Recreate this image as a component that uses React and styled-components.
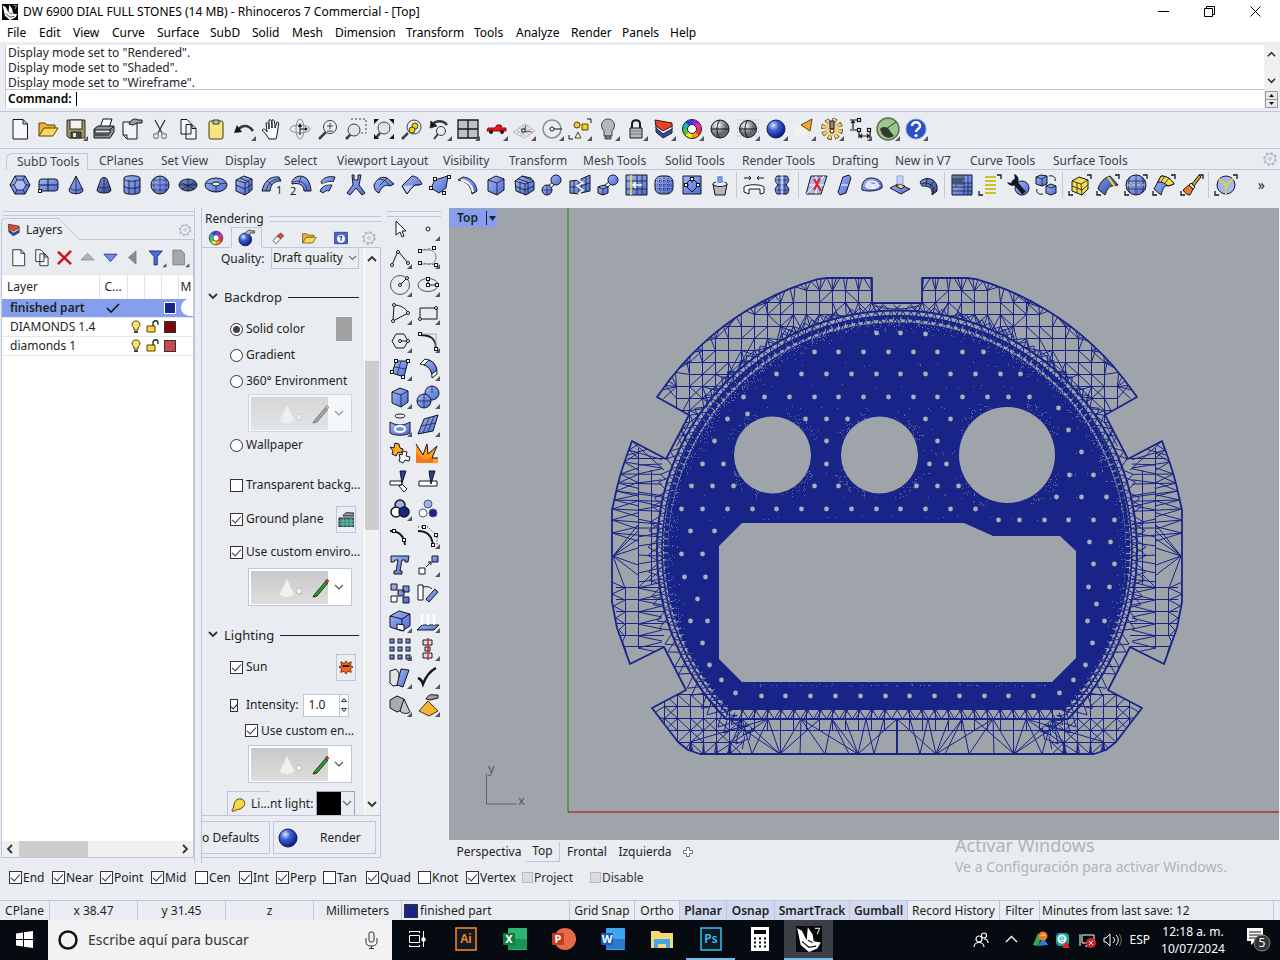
import React, { useState } from "react";
import styled, { createGlobalStyle, css } from "styled-components";

const GlobalStyle = createGlobalStyle`
  * { box-sizing: border-box; }
  body {
    margin: 0;
    background: #e9ecf0;
    color: #1d1f24;
    font: 12px/16px "Noto Sans", "Open Sans", sans-serif;
    overflow: hidden;
  }
  button, input, select {
    font: inherit;
    color: inherit;
    margin: 0;
    padding: 0;
  }
  button { border: 0; background: none; }
  svg { display: block; flex: none; }
`;

const LINE = "#bcc7dd";
const NAVY = "#182487";
const K = "#15171c";
const BL = "url(#blue)";

/* ---------- icons, all on a 28 x 28 board ---------- */

const node = (x, y) => <rect key={x + "-" + y} x={x - 1.5} y={y - 1.5} width="3" height="3" fill="#fff" stroke={K} />;
const corners = <path d="M21 4h4v4M3 20v4h4" fill="none" stroke={K} strokeWidth="1.3" />;

const art = {
  page: <path d="M7 4.500h10l4.500 4.500v15H7zM17 4.500v4.500h4.500" fill="#f7f7f7" stroke={K} />,
  open: (
    <g stroke="#5b4310">
      <path d="M5 21V8h6l2 2h8v3" fill="#e8b62e" />
      <path d="M5 21l5-8h14l-5 8z" fill="#fbd75c" />
    </g>
  ),
  save: (
    <g stroke="#33301c">
      <path d="M5 5h18v18H7l-2-2z" fill="#9c946a" />
      <path d="M8 5h12v9H8z" fill="#f1f1f1" />
      <path d="M9 17h10v6H9z" fill="#4a4a44" />
      <path d="M11 18h3v4h-3z" fill="#ddd" stroke="none" />
    </g>
  ),
  print: (
    <g stroke={K}>
      <path d="M10 13l3-9h9l-3 9" fill="#fff" />
      <path d="M4 14l4-3h16v6l-4 6H4z" fill="#8c8f94" />
      <path d="M5 15h15v3H5z" fill="#e7e7e7" />
      <path d="M20 15l4-4M5 20h14" />
    </g>
  ),
  props: (
    <g stroke={K}>
      <path d="M5 7h14v17H9l-4-4zM5 20h4v4" fill="#f5f5f5" />
      <path d="M11 9c2-5 6-6 9-4h4v3h-5l-4 2z" fill="#9a9da2" />
    </g>
  ),
  cut: (
    <g fill="none" stroke="#2f3238" strokeWidth="1.3">
      <path d="M9 5l7 13M19 5l-7 13" />
      <circle cx="10" cy="21" r="2.5" stroke="#8b8e93" />
      <circle cx="18" cy="21" r="2.5" stroke="#8b8e93" />
    </g>
  ),
  copy: <path d="M7 4.500h6l4 4V19H7zM12 9.500h6l4 4V24H12zM18 9.500v4h4" fill="#f7f7f7" stroke={K} />,
  paste: (
    <g stroke="#3f3a18">
      <rect x="7" y="6" width="14" height="18" rx="2" fill="#f5e480" />
      <path d="M11 5h6v4h-6z" fill="#b9b9b9" />
    </g>
  ),
  undo: (
    <g>
      <path d="M8 15c4-5 10-6 15 1" fill="none" stroke="#34373d" strokeWidth="2.5" />
      <path d="M4 18l3-8 5 7z" fill={K} />
    </g>
  ),
  hand: <path d="M11 24c-2-4-5-7-7-9 2-2 4 0 5 2L8 8c2-1 3 1 3 6V5c2-1 3 0 3 8V5c2-1 3 1 3 8l2-6c2 0 2 1 1 6l-1 7-1 4z" fill="#fafafa" stroke={K} />,
  orbit: (
    <g fill="none" stroke="#8b8e93">
      <ellipse cx="14" cy="14" rx="10" ry="4" />
      <ellipse cx="14" cy="14" rx="4" ry="10" />
      <path d="M14 11v9M14 14h6" stroke={K} />
      <path d="M14 8l2 4h-4zM22 14l-3 2v-4z" fill={K} stroke="none" />
    </g>
  ),
  zoomIn: (
    <g fill="#eee" stroke="#3b3e44">
      <path d="M12 17l-7 7" strokeWidth="2.5" />
      <circle cx="16" cy="12" r="6.5" />
      <path d="M13 11h6M16 8v6M13 16h6" />
    </g>
  ),
  zoomWin: (
    <g fill="#e3e5e8" stroke="#3b3e44">
      <path d="M9 4h15v14h-6" fill="none" strokeDasharray="2 2" />
      <path d="M9 19l-5 5" strokeWidth="2.5" />
      <circle cx="12" cy="15" r="6" />
    </g>
  ),
  zoomExt: (
    <g fill="#e3e5e8" stroke="#3b3e44">
      <path d="M10 18l-4 5" strokeWidth="2.5" />
      <circle cx="14" cy="13" r="6" />
      <path d="M4 4h5l-5 5zM24 4h-5l5 5zM4 24h5l-5-5zM24 24h-5l5-5z" fill={K} stroke="none" />
    </g>
  ),
  zoomSel: (
    <g fill="#f2f2f2" stroke="#3b3e44">
      <path d="M10 18l-6 6" strokeWidth="2.5" />
      <circle cx="16" cy="12" r="7" />
      <circle cx="17" cy="11" r="3" fill="#f3d300" />
      <circle cx="14" cy="15" r="3" fill="#f3d300" />
    </g>
  ),
  undoView: (
    <g fill="none" stroke="#34373d">
      <path d="M6 10c4-5 11-5 15 0" strokeWidth="2.5" />
      <path d="M4 13l1-7 6 5z" fill={K} />
      <circle cx="15" cy="16" r="4.5" fill="#eceef0" />
      <path d="M12 19l-4 5" strokeWidth="2" />
    </g>
  ),
  four: (
    <g stroke={K} strokeWidth="1.3">
      <path d="M4 5h20v18H4z" fill="#bfc1c3" />
      <path d="M14 5v18M4 14h20" />
    </g>
  ),
  car: (
    <g>
      <path d="M5 16l1-3h7l2-3h4l1 3h4v3z" fill="#e0191b" stroke="#8d0c0c" />
      <circle cx="9" cy="17" r="2" fill={K} />
      <circle cx="20" cy="17" r="2" fill={K} />
    </g>
  ),
  cplane: (
    <g fill="none" stroke="#b7babf">
      <path d="M3 17l12-8 10 7-11 7zM6 15l11 7M9 13l11 7M12 11l11 7M6 19l12-8M10 21l12-8" />
      <path d="M14 16l2-6" stroke="#2d9232" />
      <path d="M14 16l8 1" stroke="#b33" />
      <rect x="12" y="14" width="3" height="3" fill="#fff" stroke={K} />
    </g>
  ),
  cplaneSet: (
    <g fill="none" stroke="#8b8e93">
      <circle cx="14" cy="14" r="9" strokeWidth="1.5" />
      <path d="M14 14h10" stroke={K} />
      <circle cx="14" cy="14" r="2" fill="#fff" stroke={K} />
    </g>
  ),
  select: (
    <g stroke="#55430c">
      <circle cx="11" cy="10" r="3" fill="#f6cf1d" />
      <path d="M16 9h6v6h-6z" fill="#f6cf1d" />
      <path d="M12 17l3 6H9z" fill="#eee" />
      <path d="M21 4h4v4M3 20v4h4" fill="none" stroke={K} />
    </g>
  ),
  bulb: (
    <g stroke="#4a4c50">
      <path d="M10 16c-5-5-2-12 4-12s9 7 4 12v5h-8z" fill="#b4b6b9" />
      <path d="M11 21h6v3h-6z" fill="#77797d" />
    </g>
  ),
  lock: (
    <g stroke={K}>
      <path d="M10 13V9c0-5 8-5 8 0v4" fill="none" strokeWidth="2" />
      <path d="M8 13h12v10H8z" fill="#b9bbbe" />
      <path d="M9 16h10M9 19h10" stroke="#77797d" />
    </g>
  ),
  layers: (
    <g stroke="#2a1a1a">
      <path d="M6 12v5l7 6 9-5v-5z" fill="#294bb8" />
      <path d="M6 9v4l7 6 9-5v-4z" fill="#f2f2f2" />
      <path d="M5 5l17 3v3l-9 5-7-5z" fill="#e8432a" />
    </g>
  ),
  wheel: (
    <g fill="none" strokeWidth="4.5">
      {["#e33", "#f90", "#ee2", "#4c3", "#1bb", "#24d", "#92d", "#e2a"].map((c, i) => (
        <circle key={c} cx="14" cy="14" r="7" stroke={c} pathLength="8" strokeDasharray="1.05 7" strokeDashoffset={-i} />
      ))}
      <circle cx="14" cy="14" r="9.5" stroke={K} strokeWidth="1" />
      <circle cx="14" cy="14" r="4.5" stroke={K} strokeWidth="1" fill="#fff" />
    </g>
  ),
  ballGray: (
    <g>
      <circle cx="14" cy="14" r="9" fill="url(#gray)" stroke={K} />
      <path d="M14 5c-4 4-4 14 0 18M5 14h18" fill="none" stroke={K} />
    </g>
  ),
  ballDots: (
    <g>
      <path d="M3 5h22M3 9h22M3 13h22M3 17h22M3 21h22" stroke="#9b9ea4" strokeDasharray="1 2" />
      <circle cx="14" cy="14" r="8.5" fill="url(#gray)" stroke={K} />
      <path d="M14 5c-4 4-4 14 0 18M5 14h18" fill="none" stroke={K} />
    </g>
  ),
  ball: <circle cx="14" cy="14" r="9" fill="url(#ballblue)" stroke="#0c1a56" />,
  ballPot: (
    <g>
      <circle cx="13" cy="16" r="9" fill="url(#ballblue)" stroke="#0c1a56" />
      <path d="M13 8c2-5 6-6 9-4h4v3h-5l-4 3z" fill="#b5b8bc" stroke={K} />
    </g>
  ),
  spot: (
    <g>
      <path d="M3 14L16 5l5 9-14 9z" fill="#f4f1ea" />
      <path d="M11 10L22 4l-2 12z" fill="#f0a830" stroke="#54421a" />
    </g>
  ),
  gear: (
    <g>
      <circle cx="14" cy="14" r="8.5" fill="none" stroke="#4b3b12" strokeWidth="5" strokeDasharray="4 2.7" />
      <circle cx="14" cy="14" r="8.5" fill="none" stroke="#efcf7c" strokeWidth="3.5" strokeDasharray="3 3.7" strokeDashoffset="-.5" />
      <circle cx="14" cy="14" r="7" fill="#efcf7c" />
      <path d="M12 6h4v8h-4z" fill="#8e8f93" stroke={K} />
      <circle cx="14" cy="16" r="2" fill="#fff" stroke={K} />
    </g>
  ),
  dim: (
    <g fill="none" stroke={K} strokeWidth="1.2">
      <path d="M4 5h9M4 15h9v8M7 6v8M24 15v8M14 21h9M16 19l-2 2 2 2M21 19l2 2-2 2M5 8l2-2 2 2" />
      {node(13, 5)}{node(13, 15)}{node(23, 15)}
    </g>
  ),
  grass: (
    <g>
      <circle cx="14" cy="14" r="11" fill="#9cc78b" stroke="#5f705c" strokeWidth="1.5" />
      <path d="M6 14c3-3 5-2 8-1l2 3 4 5c-5 3-9 2-12-2z" fill="#34382f" />
      <path d="M12 14l10-7" stroke="#34382f" />
    </g>
  ),
  help: (
    <g>
      <circle cx="14" cy="14" r="10" fill="#2a50c8" stroke="#7f93d8" />
      <path d="M10 11c0-5 8-5 8 0 0 3-4 3-4 6" fill="none" stroke="#fff" strokeWidth="2.5" />
      <circle cx="14" cy="20.5" r="1.6" fill="#fff" />
    </g>
  ),
  hex: (
    <g stroke={K}>
      <path d="M4 14l5-9h10l5 9-5 9H9z" fill={BL} />
      <path d="M8 14l3-5h6l3 5-3 5h-6zM4 14h4M9 5l2 4M19 5l-2 4M24 14h-4M19 23l-2-4M9 23l2-4" fill="#a9bdf6" strokeWidth=".8" />
    </g>
  ),
  plane: (
    <g stroke={K}>
      <rect x="5" y="8" width="19" height="12" rx="3" fill={BL} />
      <path d="M14 8v12M5 14h19" />
      {node(6, 20)}
    </g>
  ),
  cone: (
    <g stroke={K}>
      <path d="M14 5l7 14c0 5-14 5-14 0z" fill={BL} />
      <path d="M14 5v17M8 17c3 3 9 3 12 0" fill="none" strokeWidth=".7" />
    </g>
  ),
  truncated: (
    <g stroke={K}>
      <path d="M11 8c1-2 5-2 6 0l4 11c0 4-14 4-14 0z" fill="url(#dark)" />
      <path d="M14 7v15M8 15c4 3 8 3 12 0" fill="none" strokeWidth=".7" />
    </g>
  ),
  cylinder: (
    <g stroke={K}>
      <path d="M6 7c0-3 16-3 16 0v14c0 3-16 3-16 0z" fill={BL} />
      <path d="M6 8c0 3 16 3 16 0M6 15c0 3 16 3 16 0M11 9v14M17 9v14" fill="none" strokeWidth=".8" />
    </g>
  ),
  sphere: (
    <g stroke={K}>
      <circle cx="14" cy="14" r="9" fill={BL} />
      <path d="M14 5v18M5 14h18M7 9h14M7 19h14M10 6c-3 4-3 12 0 16M18 6c3 4 3 12 0 16" fill="none" strokeWidth=".5" />
    </g>
  ),
  ellipsoid: (
    <g stroke={K}>
      <ellipse cx="14" cy="14" rx="9" ry="6" fill="url(#dark)" />
      <path d="M6 11l14 7M8 18l13-7M14 8v12M5 14h18" fill="none" strokeWidth=".7" />
    </g>
  ),
  torus: (
    <g stroke={K}>
      <ellipse cx="14" cy="14" rx="11" ry="7" fill={BL} />
      <ellipse cx="14" cy="13" rx="4" ry="2" fill="#e9ecf0" />
      <path d="M14 15v6M4 12l6 1M18 13l6-1" fill="none" strokeWidth=".7" />
    </g>
  ),
  box: (
    <g stroke={K} strokeLinejoin="round">
      <path d="M6 9l8-4 8 3v11l-7 5-9-4z" fill={BL} />
      <path d="M6 9l9 3 7-4M15 12v12M6 14l9 4 7-5M10 7l9 4v11" fill="none" strokeWidth=".8" />
    </g>
  ),
  cube: (
    <g stroke={K} strokeLinejoin="round">
      <path d="M6 9l8-4 8 3v11l-7 5-9-4z" fill={BL} />
      <path d="M6 9l9 3 7-4M15 12v12" fill="none" strokeWidth=".8" />
    </g>
  ),
  sweep1: (
    <g stroke={K}>
      <path d="M4 20C6 11 11 5 21 6l2 4c-7 0-10 3-11 10z" fill={BL} />
      <path d="M8 20C10 12 14 8 22 8M9 10l5 4" fill="none" strokeWidth=".7" />
      <text x="18" y="23" fontSize="11" stroke="none" fill={K}>1</text>
    </g>
  ),
  sweep2: (
    <g stroke={K}>
      <path d="M6 10C9 5 16 3 21 8c3 4 4 9 4 12h-7c0-5-4-9-12-7z" fill={BL} />
      <path d="M7 11c7-3 14 1 14 9M15 6l-2 6" fill="none" strokeWidth=".7" />
      <text x="4" y="24" fontSize="11" stroke="none" fill={K}>2</text>
    </g>
  ),
  loft: (
    <g stroke={K} fill={BL}>
      <path d="M7 11c3-5 8-6 14-5l-2 5c-4-1-7 0-10 3z" />
      <path d="M6 20c2-5 7-7 12-6l-3 6c-2-1-4 0-6 2z" />
      <path d="M5 17c6-6 10-4 17-5" stroke="#fff" fill="none" strokeWidth="2" />
    </g>
  ),
  multipipe: <path d="M10 4h2v5h4V4h3l-2 10 6 8-3 2-6-7-6 7-3-2 6-8z" fill={BL} stroke={K} />,
  patch: (
    <g stroke={K}>
      <path d="M4 14C7 7 12 5 17 7l7 6-4 2c-4-2-8 0-11 7-3-1-5-4-5-8z" fill={BL} />
      <path d="M9 8c5 0 8 3 11 7M17 7l-7 7" fill="none" strokeWidth=".8" />
    </g>
  ),
  patch2: (
    <g stroke={K}>
      <path d="M4 15l10-10c5 0 8 4 10 8l-3 1c-5-1-7 2-12 9z" fill={BL} />
      <path d="M4 15l5 8c5-7 7-10 12-9" fill="#c6d3fb" />
    </g>
  ),
  quad: (
    <g stroke={K}>
      <path d="M9 9l13-4-2 12-7 5-8-5z" fill={BL} />
      {node(9, 8)}{node(23, 6)}{node(5, 17)}{node(18, 22)}
    </g>
  ),
  bend: (
    <g stroke={K}>
      <path d="M4 9l5-3c8 1 13 6 14 14l-5 3C17 14 12 10 4 9z" fill={BL} />
      <path d="M7 9c6 1 11 5 12 12" stroke="#fff" fill="none" strokeWidth="2" />
    </g>
  ),
  subdBox: (
    <g stroke={K}>
      <path d="M5 10l7-5 9 2 3 4v8l-8 5-10-4z" fill={BL} />
      <path d="M5 10l10 3 9-3M15 13v11M10 11v11M8 8l10 3v12M5 15l10 4 9-4M12 5l9 4" fill="none" strokeWidth=".8" />
    </g>
  ),
  link: (
    <g stroke={K} fill={BL}>
      <path d="M10 15l6-5 2 2-6 6z" fill="#fff" />
      <circle cx="18" cy="9" r="5" />
      <circle cx="9" cy="19" r="5" />
      <path d="M9 14v10M4 19h10" strokeWidth=".6" />
    </g>
  ),
  linkBox: (
    <g stroke={K} fill={BL}>
      <path d="M10 15l6-5 2 2-6 6z" fill="#fff" />
      <circle cx="19" cy="9" r="5" />
      <path d="M4 16l6-2 4 2v6l-5 2-5-2z" />
      <path d="M4 16l5 2 5-2M9 18v6" strokeWidth=".8" />
    </g>
  ),
  stitch: (
    <g stroke={K}>
      <path d="M4 10l9-1v14l-9-1zM15 8l9-4v16l-9 2z" fill={BL} />
      <path d="M4 16h9M8 9v13M15 15l9-3M20 6v15" strokeWidth=".8" />
      <path d="M11 8l6 4-6 3 6 4-5 4" fill="none" stroke="#fff" strokeWidth="1.5" />
    </g>
  ),
  insert: (
    <g stroke={K}>
      <path d="M4 4h21v20H4z" fill={BL} />
      <path d="M4 10h21M4 18h21M15 4v20M20 4v20" strokeWidth=".8" />
      <path d="M9 4v20" stroke="#f3e440" strokeWidth="1.5" />
      <path d="M20 14h-9M14 11l-3 3 3 3" fill="none" stroke="#fff" strokeWidth="1.5" />
    </g>
  ),
  gridBall: (
    <g stroke={K}>
      <rect x="5" y="5" width="18" height="18" rx="6" fill={BL} />
      <path d="M10 5v18M14 5v18M18 5v18M5 10h18M5 14h18M5 18h18" strokeWidth=".8" strokeDasharray="1 1" />
    </g>
  ),
  diamondBox: (
    <g stroke={K}>
      <path d="M5 5h18v18H5z" fill={BL} />
      <path d="M14 7l7 7-7 7-7-7zM14 7v5M7 14h4" fill="none" />
      {node(14, 8)}{node(20, 14)}{node(8, 14)}
    </g>
  ),
  bucket: (
    <g stroke={K}>
      <path d="M7 13h14l-2 11H9z" fill="#b5b7ba" />
      <ellipse cx="14" cy="13" rx="7" ry="2.5" fill="#eee" />
      <path d="M10 5l7-1 1 8-7 1z" fill="#7c97ea" stroke="#fff" />
    </g>
  ),
  bridge: (
    <g stroke={K} fill="none">
      <path d="M4 16c3-3 17-3 20 0v6l-4 1v-5H9v5l-5-2z" fill="#fff" />
      <path d="M4 7h7M24 7h-7M9 5l2 2-2 2M19 5l-2 2 2 2" />
    </g>
  ),
  symmetry: (
    <g stroke={K}>
      <path d="M14 5H9c-3 4-2 5 1 9-3 3-4 5-1 9h10c3-4 2-6-1-9 3-4 4-5 1-9z" fill={BL} />
      <path d="M8 9h12M10 14h8M8 19h12M11 5v18M17 5v18" strokeWidth=".6" />
      <path d="M14 3v22" stroke="#fff" />
    </g>
  ),
  redX: (
    <g>
      <path d="M9 5h16l-6 18H4z" fill="#a9bbf0" stroke={K} />
      <path d="M4 23l18-18M14 5v18M7 14h15" stroke="#fff" />
      <path d="M12 8l7 12M18 7l-6 12" stroke="#df1f22" strokeWidth="2.2" />
    </g>
  ),
  pill: (
    <g stroke={K}>
      <path d="M8 21L13 6l6-2 2 3-5 15-6 2z" fill={BL} />
      <path d="M11 14h7" stroke="#fff" />
    </g>
  ),
  bend3: (
    <g stroke={K}>
      <path d="M4 19c-1-7 3-12 9-12 7 0 12 4 11 10-5 3-13 4-20 2z" fill={BL} />
      <path d="M8 16c-1-4 2-6 6-6s7 3 7 5-9 4-13 1zM10 11l5 3 5-2M15 14v4" fill="#dbe3fb" stroke="#fff" />
    </g>
  ),
  extrude: (
    <g stroke={K}>
      <path d="M4 17l8-4 12 5-9 5z" fill={BL} />
      <path d="M10 15l4-2 5 2-4 3z" fill="#f6d94a" />
      <path d="M11 5h6v8h-6z" fill="#c8d5fa" stroke="#8ba2e8" />
    </g>
  ),
  pipe: (
    <g stroke={K}>
      <path d="M6 11c5-6 15-4 17 4v5l-5 4c1-8-4-9-10-9z" fill="url(#dark)" />
      <path d="M7 13c7-3 13 1 13 9M13 8l-1 6M20 10l-4 5" fill="none" strokeWidth=".8" />
    </g>
  ),
  bigGrid: (
    <g stroke={K}>
      <path d="M4 4h20v20H4z" fill={BL} />
      <path d="M8 4v12M12 4v10M16 4v20M20 4v20M4 8h12M4 12h20M4 16h20M4 20h20M6 4v10M10 4v10M14 4v10M4 10h10" strokeWidth=".7" />
    </g>
  ),
  list: (
    <g>
      <path d="M9 6h11M9 10h11M9 14h11M9 18h11M9 22h11" stroke="#b09c10" strokeWidth="2" />
      <path d="M9 6h11M9 10h11M9 14h11M9 18h11M9 22h11" stroke="#f2e33a" />
      {corners}
    </g>
  ),
  wrench: (
    <g>
      <ellipse cx="18" cy="17" rx="7" ry="7" fill={BL} stroke={K} />
      <path d="M9 9l11 13" stroke={K} strokeWidth="4.5" />
      <path d="M10 3a6 6 0 1 1-7 8l4 1 4-4z" fill={K} />
    </g>
  ),
  swap: (
    <g stroke={K}>
      <path d="M4 6l5-2 6 1v8l-5 2-6-2z" fill={BL} />
      <path d="M14 15l5-2 5 2v7l-5 2-5-2z" fill={BL} />
      <path d="M4 6l6 2 5-3M10 8v7M14 15l5 2 5-2" fill="none" strokeWidth=".8" />
      <path d="M17 5c5-1 7 2 6 5M11 23c-5 1-7-2-6-5" fill="none" />
    </g>
  ),
  yBox: (
    <g stroke={K}>
      <path d="M6 10l7-4 9 3v9l-6 6-10-4z" fill="#f3de53" />
      <path d="M6 10l9 3 7-4M15 13l1 11M11 12v10M6 15l10 4 6-5" fill="none" strokeWidth=".8" />
      {corners}
    </g>
  ),
  yBend: (
    <g stroke={K}>
      <path d="M4 18c2-7 6-11 12-13l8 9-6 1c-4 1-5 4-7 9z" fill="url(#dark)" />
      <path d="M14 6l7 10" stroke="#f3de22" strokeWidth="2" />
      {corners}
    </g>
  ),
  yBall: (
    <g stroke={K}>
      <circle cx="14" cy="14" r="10" fill={BL} />
      <path d="M8 6c-2 5-2 11 0 16M20 6c2 5 2 11 0 16M14 4v20M4 10h20M4 18h20" fill="none" strokeWidth=".6" />
      <path d="M5 14h18" stroke="#f3de22" strokeDasharray="3 2" />
      {corners}
    </g>
  ),
  yPatch: (
    <g stroke={K}>
      <path d="M4 18l7-13c6 0 10 3 13 8l-6 2c-3-2-5 2-7 9z" fill={BL} />
      <path d="M8 11l3-6c6 0 10 3 13 8l-6 2c-3-3-6-4-10-4z" fill="#f3de53" />
      <path d="M11 11l4-6M15 12l4-5" strokeWidth=".8" />
      {corners}
    </g>
  ),
  brush: (
    <g stroke={K}>
      <path d="M5 19l6-5 4 4-3 6c-3 0-5-2-7-5z" fill="#ee7a26" />
      <path d="M11 14l2-2 4 4-2 2z" fill="#ddd" />
      <path d="M14 13l7-9 2 2-7 9z" fill="#d99a2b" />
      {corners}
    </g>
  ),
  yCone: (
    <g>
      <circle cx="14" cy="14" r="9" fill="#a4b7f2" stroke={K} />
      <path d="M14 14v9M14 14L7 8M14 14l7-6" stroke="#e4d32e" strokeWidth="2" />
      {corners}
    </g>
  ),
  arrow: <path d="M10 6v14l4-3 2 5 2-1-2-5h4z" fill="#fff" stroke={K} />,
  dot: <circle cx="14" cy="14" r="2" fill="#fff" stroke={K} />,
  poly: (
    <g fill="none" stroke={K}>
      <path d="M6 22l6-14 10 12" />
      <circle cx="6" cy="22" r="1.5" fill="#fff" /><circle cx="12" cy="9" r="1.5" fill="#fff" /><circle cx="22" cy="20" r="1.5" fill="#fff" />
    </g>
  ),
  curve: (
    <g fill="none" stroke={K}>
      <path d="M7 7h9c8 1 8 13 0 14H7" stroke="#777" />
      <path d="M6 7l14-2M6 20l16 2" strokeDasharray="2 2" stroke="#777" />
      {node(6, 8)}{node(20, 5)}{node(6, 20)}{node(22, 22)}
    </g>
  ),
  circle: (
    <g fill="none" stroke={K}>
      <circle cx="14" cy="14" r="9.5" stroke="#555" />
      <path d="M14 14l7-7" />
      <circle cx="14" cy="14" r="1.5" fill="#fff" /><circle cx="21" cy="7" r="1.5" fill="#fff" />
    </g>
  ),
  ellipse: (
    <g fill="none" stroke={K}>
      <ellipse cx="14" cy="14" rx="10" ry="6.5" stroke="#555" />
      <path d="M14 7v7h9" />
      {node(14, 8)}{node(14, 14)}{node(23, 14)}
    </g>
  ),
  arc: (
    <g fill="none" stroke={K}>
      <path d="M8 6l-1 16 15-8M8 6c6 0 12 3 14 8" />
      <circle cx="8" cy="6" r="1.5" fill="#fff" /><circle cx="7" cy="22" r="1.5" fill="#fff" /><circle cx="22" cy="14" r="1.5" fill="#fff" />
    </g>
  ),
  rect: (
    <g fill="none" stroke={K}>
      <path d="M6 9h17v11H6z" />
      <circle cx="6" cy="20" r="1.5" fill="#fff" /><circle cx="22" cy="9" r="1.5" fill="#fff" />
    </g>
  ),
  polygon: (
    <g fill="none" stroke={K}>
      <path d="M6 14l4-7h8l4 7-4 7h-8zM14 14h8" />
      <circle cx="14" cy="14" r="1.5" fill="#fff" /><circle cx="22" cy="14" r="1.5" fill="#fff" />
    </g>
  ),
  fillet: (
    <g fill="none" stroke={K}>
      <path d="M6 8c10 0 16 3 16 14" strokeWidth="1.8" />
      <path d="M8 7h14v13" stroke="#a5a8ad" />
      {node(6, 7)}{node(22, 22)}
    </g>
  ),
  surface: (
    <g stroke={K}>
      <path d="M10 6h12l-4 16-12-4z" fill={BL} />
      <path d="M8 12l12 2M15 6l-4 14" strokeWidth=".7" />
      {node(10, 6)}{node(22, 6)}{node(6, 17)}{node(17, 22)}
    </g>
  ),
  sweep: (
    <g stroke={K}>
      <path d="M6 9l5-5c8 1 12 6 12 15l-5 4C18 14 14 10 6 9z" fill="#fff" />
      <path d="M10 10l5-5c4 2 7 5 8 10l-5 4c-1-4-4-8-8-9z" fill={BL} />
    </g>
  ),
  balls: (
    <g stroke={K} fill={BL}>
      <circle cx="18" cy="10" r="7" />
      <circle cx="10" cy="18" r="7" />
      <path d="M10 11v14M3 18h14M18 3v7" strokeWidth=".7" />
    </g>
  ),
  project: (
    <g stroke={K}>
      <ellipse cx="14" cy="5" rx="5" ry="2" fill="#fff" />
      <path d="M4 11c6 4 14 4 20 0v11c-5 3-15 3-20 0z" fill={BL} />
      <ellipse cx="14" cy="18" rx="5" ry="3" fill="#6f8fe8" stroke="#fff" strokeWidth="2" />
    </g>
  ),
  meshSurf: (
    <g stroke={K}>
      <path d="M10 8l14-4-5 16-15 3z" fill={BL} />
      <path d="M7 15l15-3M15 7l-6 15M20 5l-6 16" strokeWidth=".7" />
    </g>
  ),
  puzzle: (
    <g stroke={K}>
      <path d="M4 8l4 1 1-5 4 1 1 4 3 1-2 4-3-1-2 4-4-2 1-3z" fill="#ffae20" />
      <path d="M13 15l3 1 1-4 4 1-1 4 4 1-1 4-4-1-2 3-4-2 1-3z" fill="#fff" />
    </g>
  ),
  explode: (
    <g>
      <path d="M2 24V5l7 11 4-11 1 10 9-8-5 12h6v5z" fill="#ff9a1c" />
      <path d="M2 24V14l8 7 9-3v6z" fill="#f7761c" />
      <path d="M2 5l7 11 4-11 1 10 9-8-5 12h6" fill="none" stroke={K} />
    </g>
  ),
  trim: (
    <g stroke={K}>
      <path d="M4 14h12v4H4zM16 17l5 5-3 3-5-6z" fill="#fff" />
      <path d="M14 4h6l-4 12z" fill="#22409a" />
    </g>
  ),
  split: (
    <g stroke={K}>
      <path d="M5 14h18v5H5z" fill="#fff" />
      <path d="M15 4h6l-4 13z" fill="#22409a" />
    </g>
  ),
  union: (
    <g stroke={K} strokeWidth="1.5">
      <circle cx="14" cy="10" r="5" fill="#9fb0ee" />
      <circle cx="10" cy="17" r="5" fill="#fff" />
      <circle cx="18" cy="17" r="5" fill={NAVY} />
    </g>
  ),
  three: (
    <g stroke="#555a70">
      <circle cx="14" cy="9" r="4" fill="#9fb0ee" />
      <circle cx="9" cy="18" r="4" fill="#fff" />
      <circle cx="19" cy="18" r="4" fill={NAVY} />
    </g>
  ),
  editCrv: (
    <g fill="none" stroke={K} strokeWidth="1.8">
      <path d="M4 8c9 0 14 5 15 14" />
      <g strokeWidth="1">{node(8, 8)}{node(18, 17)}</g>
    </g>
  ),
  editPts: (
    <g fill="none" stroke={K} strokeWidth="1.8">
      <path d="M4 8c9 0 14 5 15 14" />
      <path d="M4 4h10l9 9v10" strokeDasharray="1 2" strokeWidth="1" />
      <g strokeWidth="1">{node(10, 4)}{node(22, 12)}{node(19, 22)}</g>
    </g>
  ),
  text: <path d="M5 5h18l-1 6h-3V9h-3l-2 11h2v3H8v-3h2l2-11H9l-1 2H5z" fill={BL} stroke={K} />,
  move: (
    <g stroke={K}>
      <path d="M18 5h6v6h-6z" fill={BL} />
      <path d="M5 17h6v6H5z" fill="#fff" />
      <path d="M12 16l5-5M14 11h3v3" fill="none" />
    </g>
  ),
  scatter: (
    <g stroke={K} fill={BL}>
      <path d="M5 5h6v6H5zM17 7h6v6h-6zM12 11h6v6h-6zM17 18h6v6h-6z" />
      <path d="M5 17h6v6H5z" fill="#fff" />
    </g>
  ),
  orient: (
    <g stroke={K}>
      <path d="M4 6h5v15H4z" fill="#fff" />
      <path d="M12 20l9-10 3 3-9 10z" fill={BL} />
      <path d="M9 8c4-1 7 0 9 2" fill="none" />
    </g>
  ),
  boolBox: (
    <g stroke={K}>
      <path d="M4 9l9-5 11 3v12l-8 5-12-4z" fill={BL} />
      <path d="M4 9l12 3 8-5M16 12v6" fill="none" />
      <path d="M11 17l7 1v6l-7-2z" fill="#fff" />
    </g>
  ),
  extrudeUp: (
    <g>
      <path d="M8 18h17l-5 5H3z" fill={BL} stroke={K} />
      <path d="M8 18V7M14 18V7M20 18V7" stroke="#fff" strokeWidth="2" />
    </g>
  ),
  array: (
    <g stroke={K} fill={BL}>
      {[4, 12, 20].map((y) => [4, 12, 20].map((x) => <rect key={x + "." + y} x={x} y={y} width="4" height="4" />))}
    </g>
  ),
  align: (
    <g stroke={K} fill="#ddd">
      <path d="M9 5h9v5H9zM11 12h5v4h-5zM9 18h9v5H9z" />
      <path d="M14 3v22" stroke="#d22" strokeWidth="1.5" />
    </g>
  ),
  flow: (
    <g stroke={K}>
      <path d="M4 8l6-2 3 4v12l-6 1-3-3z" fill="#e4e4e4" />
      <path d="M15 6l8 1-6 17-6-2z" fill={BL} />
    </g>
  ),
  check: <path d="M4 15c3 1 4 3 5 6C12 13 16 8 22 5" fill="none" stroke={K} strokeWidth="2.5" />,
  solids: (
    <g stroke={K}>
      <path d="M4 9l7-4 7 3v10l-7 3-7-4z" fill="#a9abae" />
      <path d="M18 8l6 13c-2 2-8 2-10-1z" fill="#c6c8ca" />
    </g>
  ),
  pyramid: (
    <g stroke="#49340c">
      <path d="M14 10l10 10-9 5L5 20z" fill="#f3b436" />
      <path d="M12 8c2-4 5-5 8-4h4v3l-8 2z" fill="#9a9da2" stroke={K} />
    </g>
  ),
  redCross: <path d="M6 7l16 15M22 6L6 22" stroke="#c9161b" strokeWidth="3" />,
  up: <path d="M14 9l8 8H6z" fill="#b2b5b9" stroke="#85888c" />,
  down: <path d="M14 19l-8-9h16z" fill="#6f8dea" stroke={NAVY} />,
  left: <path d="M8 14l9-8v16z" fill="#8b8d91" stroke="#77797d" />,
  filter: <path d="M5 6h16l-6 7v10h-4V13z" fill="#4a6cd6" stroke={NAVY} />,
  pageGray: <path d="M6 5h10l4 4v14H6z" fill="#a6a8ab" stroke="#77797d" />,
  tube: (
    <g stroke="#4a2218">
      <path d="M7 18l6-7 5 4-7 7z" fill="#f4f4f4" />
      <path d="M13 11l5-4 4 4-4 4z" fill="#e0502c" />
    </g>
  ),
  bookHelp: (
    <g>
      <path d="M5 6h18v16H5z" fill="#4a68cc" stroke={NAVY} />
      <circle cx="14" cy="15" r="5.500" fill="#fff" />
      <path d="M12 13c1-3 5-1 2 2v3" fill="none" stroke={NAVY} strokeWidth="1.500" />
    </g>
  ),
  cog: (
    <g fill="none" stroke="#a9b1c0">
      <circle cx="14" cy="14" r="7" strokeWidth="1.2" />
      <circle cx="14" cy="14" r="2" />
      <circle cx="14" cy="14" r="8.500" strokeWidth="2" strokeDasharray="3.500 3.100" />
    </g>
  ),
};

function Icon({ name, size = 28, fly }) {
  return (
    <svg width={size} height={size} viewBox="0 0 28 28" aria-hidden="true">
      {art[name]}
      {fly && <path d="M26 21v5h-5z" fill="#55585e" />}
    </svg>
  );
}

const Defs = styled.svg`
  position: absolute;
  width: 0;
  height: 0;
`;

/* ---------- wireframe of the dial ---------- */

let seed = 7;
const rnd = () => {
  seed = (seed * 16807) % 2147483647;
  return seed / 2147483647;
};
const polar = (r, deg, cy = 555) => [897 + r * Math.cos((deg * Math.PI) / 180), cy + r * Math.sin((deg * Math.PI) / 180)];
const seg = (a, b) => `M${a[0].toFixed(1)} ${a[1].toFixed(1)}L${b[0].toFixed(1)} ${b[1].toFixed(1)}`;
const range = (from, to, step) => {
  const out = [];
  for (let v = from; v <= to; v += step) out.push(v);
  return out;
};

const leftOutline = [
  [897, 303], [872, 303], [872, 278], [827, 278],
  ...range(106, 143, 3).map((a) => polar(287, -a)),
  [657, 397], [689, 415], [666, 459], [632, 441],
  ...range(160, 168, 3).map((a) => polar(288, -a)),
  [612, 510], [612, 602],
  [617, 628], [630, 664], [664, 647], [686, 690], [652, 708], [665, 725], [678, 742], [688, 750], [700, 754], [897, 754],
];
const outline = [...leftOutline, ...leftOutline.slice(1, -1).reverse().map(([x, y]) => [1794 - x, y])];

function buildMesh() {
  const d = [];
  const nodes = [];
  const line = (a, b) => d.push(seg(a, b));
  const dist = (x, y) => Math.hypot(x - 897, y - 555);

  // square lattice of the upper segments
  for (let i = 0; i < 18; i++) {
    for (let j = 0; j < 12; j++) {
      const x = 676.5 + i * 13;
      const y = 290.5 + j * 12;
      const inBand = (px, py) => dist(px, py) < 284 && dist(px, py) > 246;
      if (!inBand(x, y)) continue;
      nodes.push([x, y]);
      const inner = dist(x, y) < 262;
      if (inBand(x + 13, y)) line([x, y], [x + 13, y]);
      if (inBand(x, y + 12)) line([x, y], [x, y + 12]);
      if (inBand(x + 13, y + 12) && rnd() > (inner ? 0.5 : 0.8)) line([x, y], [x + 13, y + 12]);
      if (inBand(x - 13, y + 12) && rnd() > (inner ? 0.4 : 0.7)) line([x, y], [x - 13, y + 12]);
      if (inner && rnd() > 0.6) line([x, y], [x - 13, y + 24]);
      if (inner && rnd() > 0.7) line([x, y], [x + 13, y + 24]);
    }
  }
  // lower corner lattice
  for (let i = 0; i < 6; i++) {
    for (let j = 0; j < 5; j++) {
      const x = 664.5 + i * 13;
      const y = 694.5 + j * 12;
      nodes.push([x, y]);
      line([x, y], [x + 13, y]);
      line([x, y], [x, y + 12]);
      if (rnd() > 0.6) line([x, y], [x + 13, y + 12]);
      if (rnd() > 0.6) line([x + 13, y], [x, y + 12]);
    }
  }
  const near = (p, n) => [...nodes].sort((a, b) => Math.hypot(a[0] - p[0], a[1] - p[1]) - Math.hypot(b[0] - p[0], b[1] - p[1])).slice(0, n);
  range(91, 145, 1.1).forEach((a, i) => near(polar(287, -a), i % 3 ? 1 : 2).forEach((n) => line(polar(287, -a), n)));
  range(95, 146, 1.8).forEach((a) => near(polar(240, -a, 551), 2).forEach((n) => line(polar(240, -a, 551), n)));
  range(123, 148, 1.2).forEach((a) => near(polar(289, a), 1).forEach((n) => line(polar(289, a), n)));

  // side segment: long thin triangles, denser towards the top
  line([638.5, 448], [638.5, 648]);
  line([651.5, 470], [651.5, 585]);
  line([625.5, 587], [625.5, 636]);
  [458.5, 587.5, 599.5, 611.5, 623.5, 635.5, 646.5].forEach((y) => line([y > 500 ? 616 : 628, y], [664, y]));
  const rim = (y) => [y < 510 || y > 602 ? 897 - Math.sqrt(288 * 288 - (y - 555) ** 2) : 612, y];
  [450, 462, 474, 483, 491, 500, 509, 520, 533].forEach((y) => {
    line(rim(y), [638, y - 9 + rnd() * 4]);
    line(rim(y), [638, y + 5 + rnd() * 4]);
    line(rim(y), [662, y + rnd() * 10]);
  });
  [525, 531, 539, 548, 565, 575].forEach((y) => line([613, 556], [638, y]));
  line([613, 556], [625, 588]);
  [588, 600, 612, 624, 636, 648].forEach((y) => {
    line(rim(y - 6), [625, y]);
    line(rim(y + 6), [625, y]);
    line([638, y], [662, y - 6]);
    line([638, y], [662, y + 5]);
  });
  range(465, 582, 9).forEach((y) => line([638, y], [662, y + rnd() * 12 - 6]));
  line([638, 588], [651, 575]);
  line([632, 441], [664, 470]);
  line([628, 455], [655, 447]);

  // flange between the dial face and the rim
  range(90, 232, 0.95).forEach((a, i) => {
    const b = -a;
    line(polar(229, b, 551), polar(240, b + (i % 2 ? 1.4 : -1.4), 551));
    if (i % 3) line(polar(240, b, 551), polar(249, b + (i % 2 ? 1.8 : -1), 554));
    if (i % 2) line(polar(230, b, 551), polar(236, b + 2, 551));
  });
  // lower strip
  line([735, 730.5], [897, 730.5]);
  range(741.5, 897, 13).forEach((x) => {
    line([x, 709], [x, 730]);
    line([x, 709], [x + 7, 719]);
    line([x + 13, 709], [x + 7, 719]);
    line([x + 3, 709], [x - 3, 719]);
  });
  [[780, [728, 742, 768, 801, 820]], [858, [801, 832, 845, 866, 897]]].forEach(([x, tops]) =>
    tops.forEach((t) => line([x, 754], [t, 719])));
  [[742, 727], [742, 752], [768, 752], [801, 825], [832, 825], [832, 849], [866, 874], [884, 874], [801, 800]].forEach(([t, b]) =>
    line([t, 719], [b, 754]));
  [[715, 754, 768], [704, 754, 742], [690, 742, 768]].forEach(([x, y, t]) => line([x, y], [t, 719]));
  line([780.5, 719], [780.5, 754]);
  line([897.5, 719], [897.5, 754]);
  return d.join("");
}

const stoneRows = [
  [333, 876, 900], [334, 925],
  [352, 814, 838, 863, 888, 913, 937, 962, 983],
  [374, 776, 801, 826, 851, 876, 900, 925, 950, 975, 1000, 1020],
  [397, 743, 764, 789, 814, 838, 863, 888, 913, 937, 962, 987, 1008, 1029],
  [408, 1058], [414, 747],
  [419, 727, 805, 826, 847, 925, 950], [430, 1068],
  [441, 714, 826, 937], [452, 1081],
  [464, 702, 723, 826, 929, 946], [475, 1069, 1093],
  [486, 691, 712, 733, 814, 838, 916, 937, 958], [497, 1056, 1081, 1106],
  [509, 681, 702, 727, 752, 776, 801, 826, 851, 876, 900, 925, 950, 975],
  [520, 998, 1019, 1044, 1068, 1093, 1114],
  [531, 690, 714], [542, 1089, 1110], [554, 681, 702], [564, 1093, 1114],
  [577, 684, 705], [587, 1088, 1109], [599, 697], [604, 1096],
  [621, 690, 707, 1087, 1104], [643, 702, 1092], [665, 709, 1085], [680, 721, 1073], [693, 735, 1059],
  [696, 761, 785, 810, 835, 860, 885, 909, 934, 959, 984, 1008, 1033],
];

function buildSpeckle() {
  const out = [];
  const put = (x, y) => out.push(`M${Math.round(x)} ${Math.round(y)}.500h1`);
  for (let i = 0; i < 650; i++) {
    const a = -rnd() * 180 - (rnd() > 0.5 ? 20 : -20);
    const p = polar(229 - rnd() * rnd() * 12, a, 551);
    if (p[1] < 706) put(...p);
  }
  [[772, 455, 39], [880, 455, 39], [1007, 455, 49]].forEach(([cx, cy, r]) => {
    for (let i = 0; i < 110; i++) {
      const a = ((Math.floor(rnd() * 4) * 90 + 45 + rnd() * 50 - 25) * Math.PI) / 180;
      const q = r + rnd() * 9;
      put(cx + q * Math.cos(a), cy + q * Math.sin(a));
    }
  });
  for (let i = 0; i < 160; i++) put(700 + rnd() * 400, 362 + Math.floor(rnd() * 8) * 22 + rnd() * 4);
  for (let i = 0; i < 60; i++) put(745 + rnd() * 300, 684 + rnd() * 2);
  return out.join("");
}

const meshPath = buildMesh();
const specklePath = buildSpeckle();
const outlinePath = "M" + outline.map((p) => p.map((v) => v.toFixed(1)).join(" ")).join("L") + "Z";
const facePath =
  "M732 710A229 229 0 1 1 1062 710Z" +
  "M742 523L964 523L993 536H1060L1076 551V658L1052 682H742L719 659V546Z" +
  "M734 455a38.500 38.500 0 1 0 77 0a38.500 38.500 0 1 0-77 0Z" +
  "M841 455a38.500 38.500 0 1 0 77 0a38.500 38.500 0 1 0-77 0Z" +
  "M959 455a48 48 0 1 0 96 0a48 48 0 1 0-96 0Z";

function Dial() {
  return (
    <g>
      <clipPath id="rim"><path d={outlinePath} /></clipPath>
      <g clipPath="url(#rim)" stroke={NAVY} fill="none">
        <path id="half" d={meshPath} strokeWidth="1" />
        <use href="#half" transform="translate(1794 0) scale(-1 1)" />
        <path d="M726 719A240 240 0 1 1 1068 719Z" strokeWidth="2" />
        <path d="M728 714A235 235 0 1 1 1066 714" strokeWidth="1.5" />
        <path d="M732 710A231 231 0 1 1 1062 710" strokeWidth="4" strokeDasharray="6 1" />
      </g>
      <path d={outlinePath} fill="none" stroke={NAVY} strokeWidth="1.8" strokeLinejoin="round" />
      <path d="M872 303c8 8 42 8 50 0" fill="none" stroke={NAVY} />
      <path d={facePath} fill={NAVY} fillRule="evenodd" />
      <path d={specklePath} stroke="#a3aab8" strokeOpacity=".55" clipPath="url(#face)" />
      <clipPath id="face"><path d={facePath} clipRule="evenodd" /></clipPath>
      <g fill="#a9afb4">
        {stoneRows.map(([y, ...xs]) => xs.map((x) => <circle key={x + "," + y} cx={x + 0.5} cy={y} r="2.400" />))}
      </g>
    </g>
  );
}

/* ---------- window frame ---------- */

const Window = styled.div`
  display: flex;
  flex-direction: column;
  height: 100vh;
  min-height: 900px;
`;

const TitleBar = styled.header`
  display: flex;
  align-items: center;
  height: 23px;
  padding: 0 2px;
  background: #fff;
`;

const Title = styled.h1`
  flex: 1;
  margin: 0 0 0 5px;
  font-size: 12px;
  font-weight: 400;
  color: #000;
`;

const WinButton = styled.button`
  display: grid;
  place-items: center;
  width: 46px;
  height: 22px;
`;

const MenuBar = styled.nav`
  display: flex;
  height: 19px;
  padding-left: 7px;
  background: #fff;
`;

const MenuItem = styled.button`
  width: ${(p) => p.$w}px;
  text-align: left;
  white-space: nowrap;
  color: #000;
`;

const CommandArea = styled.section`
  display: flex;
  margin: 3px 1px 3px 5px;
  border-left: 1px solid ${LINE};
  height: 63px;
  background: #fff;
`;

const CommandText = styled.div`
  flex: 1;
  min-width: 0;
`;

const History = styled.div`
  height: 45px;
  padding-left: 2px;
  line-height: 15px;
  border-bottom: 1px solid #b4bfd0;
  color: #23262c;
`;

const CommandLine = styled.label`
  display: flex;
  align-items: center;
  height: 17px;
  padding-left: 2px;
  font-weight: 600;
  color: #000;
  input {
    flex: 1;
    border: 0;
    border-left: 1px solid #000;
    margin-left: 4px;
    height: 14px;
    outline: 0;
    background: none;
  }
`;

const CommandScroll = styled.div`
  display: flex;
  flex-direction: column;
  justify-content: space-between;
  align-items: center;
  width: 15px;
  background: #f0f0f0;
  padding-top: 5px;
`;

const ScrollPair = styled.span`
  display: flex;
  flex-direction: column;
  justify-content: space-between;
  height: 36px;
`;

const ToolRow = styled.div`
  display: flex;
  align-items: center;
  height: ${(p) => p.$h}px;
  padding: 0 3px ${(p) => (p.$line ? 2 : 0)}px 6px;
  border-top: ${(p) => (p.$line ? `1px solid ${LINE}` : 0)};
`;

const Tool = styled.button`
  width: 28px;
  height: 28px;
  flex: none;
`;

const Split = styled.span`
  width: 1px;
  height: 26px;
  margin: 0 3px 0 2px;
  background: #c3c8d1;
  flex: none;
`;

const Overflow = styled.button`
  margin-left: auto;
  padding-right: 12px;
  font-size: 14px;
`;

const BarGap = styled.div`
  height: 8px;
`;

const TabStrip = styled.nav`
  display: flex;
  align-items: flex-end;
  height: 22px;
  padding-left: 6px;
  border-top: 1px solid ${LINE};
`;

const ToolTab = styled.button`
  width: ${(p) => p.$w}px;
  height: 17px;
  padding-left: 11px;
  text-align: left;
  white-space: nowrap;
  color: #3d4047;
  border-bottom: 1px solid ${LINE};
  ${(p) =>
    p.$on &&
    css`
      padding-left: 10px;
      border: 1px solid ${LINE};
      border-bottom: 0;
      border-radius: 6px 0 0 0;
    `}
`;

const StripRest = styled.div`
  flex: 1;
  display: flex;
  justify-content: flex-end;
  border-bottom: 1px solid ${LINE};
  height: 21px;
`;

const Main = styled.main`
  flex: 1;
  display: flex;
  min-height: 0;
`;

/* ---------- layers ---------- */

const LayersPanel = styled.section`
  display: flex;
  flex-direction: column;
  width: 195px;
  padding: 3px 0 5px 1px;
  border-right: 1px solid ${LINE};
  &::before { content: ""; height: 3px; margin: 0 0 2px 2px; border: 1px solid ${LINE}; border-width: 1px 0; }
`;

const LayersHead = styled.div`
  display: flex;
  height: 22px;
`;

const LayersTab = styled.button`
  display: flex;
  align-items: center;
  gap: 3px;
  width: 58px;
  padding-left: 3px;
  border: 1px solid ${LINE};
  border-width: 1px 0 0 1px;
  border-radius: 5px 0 0 0;
`;

const HeadRest = styled.div`
  flex: 1;
  display: flex;
  justify-content: flex-end;
  align-items: flex-end;
  border-bottom: 1px solid ${LINE};
`;

const LayersBody = styled.div`
  display: flex;
  flex-direction: column;
  flex: 1;
  min-height: 0;
  width: 193px;
  border: 1px solid ${LINE};
  border-top: 0;
`;

const SmallTools = styled.div`
  display: flex;
  align-items: center;
  height: 34px;
  padding-left: 5px;
  overflow: hidden;
`;

const SmallTool = styled.button`
  width: 23px;
  height: 24px;
  flex: none;
`;

const TableBox = styled.div`
  flex: 1;
  background: #fff;
  overflow: hidden;
`;

const LayerTable = styled.table`
  table-layout: fixed;
  width: 191px;
  border-collapse: collapse;
  th, td { padding: 0; font-weight: 400; text-align: left; overflow: hidden; white-space: nowrap; }
  th {
    height: 24px;
    padding-left: 5px;
    border: 1px solid #dfe4ee;
    border-width: 1px 1px 0 0;
  }
  th:last-child { padding-left: 2px; border-right: 0; }
  td { height: 19px; border-bottom: 1px solid #e3e6ea; }
  td:first-child { padding-left: 8px; }
  svg { margin: auto; }
`;

const LayerRow = styled.tr`
  ${(p) =>
    p.$on &&
    css`
      background: #859fee;
      td:first-child { font-weight: 600; }
    `}
`;

const Material = styled.span`
  display: block;
  height: 17px;
  margin-left: 3px;
  border-radius: 9px 0 0 9px;
  background: #fff;
`;

const Swatch = styled.span`
  display: block;
  width: 12px;
  height: 12px;
  margin: auto;
  background: ${(p) => p.$c};
  border: 1px solid ${(p) => p.$edge || "#333"};
`;

const HScroll = styled.div`
  display: flex;
  align-items: center;
  height: 16px;
  padding: 0 3px;
  background: #f0f0f0;
  i { width: 69px; height: 16px; margin-left: 4px; margin-right: auto; background: #cdcdcd; }
`;

/* ---------- rendering panel ---------- */

const RenderPanel = styled.section`
  display: flex;
  flex-direction: column;
  width: 180px;
  margin-left: 6px;
  padding: 2px 0 5px;
  border-left: 1px solid ${LINE};
`;

const PanelTitle = styled.h2`
  display: flex;
  align-items: center;
  gap: 5px;
  height: 17px;
  margin: 0;
  padding-left: 3px;
  font-size: 12px;
  font-weight: 400;
  &::after { content: ""; flex: 1; height: 4px; border: 1px solid ${LINE}; border-width: 1px 0; }
`;

const IconTabs = styled.div`
  display: flex;
  height: 21px;
`;

const IconTab = styled.button`
  display: grid;
  place-items: center;
  width: ${(p) => (p.$on ? 31 : 32)}px;
  border: 1px solid ${(p) => (p.$on ? LINE : "transparent")};
  border-bottom: 1px solid ${(p) => (p.$on ? "transparent" : LINE)};
  &:first-child { width: 29px; }
  &:last-child { width: 24px; }
`;

const PanelBody = styled.div`
  display: flex;
  flex: 1;
  min-height: 0;
  border-right: 1px solid ${LINE};
`;

const Fields = styled.div`
  flex: 1;
  min-width: 0;
  overflow: hidden;
`;

const VScroll = styled.div`
  display: flex;
  flex-direction: column;
  align-items: center;
  width: 15px;
  margin-right: 1px;
  padding: 6px 0 5px;
  background: #f0f0f0;
  border-left: 1px solid #fff;
  i { width: 14px; height: 169px; margin-top: 97px; margin-bottom: auto; background: #cdcdcd; }
`;

const Row = styled.div`
  display: flex;
  align-items: center;
  height: ${(p) => p.$h || 26}px;
  margin-top: ${(p) => p.$mt || 0}px;
  padding: 0 ${(p) => p.$end || 12}px 0 ${(p) => p.$in || 28}px;
  gap: 4px;
  white-space: nowrap;
  > :nth-child(2) { margin-left: auto; }
`;

const Section = styled.h3`
  display: flex;
  align-items: center;
  gap: 6px;
  height: 28px;
  margin: ${(p) => p.$mt}px 5px 5px 6px;
  font-size: 13px;
  font-weight: 400;
  &::after { content: ""; flex: 1; height: 1px; background: #222; }
`;

const Check = styled.label`
  display: flex;
  align-items: center;
  gap: 3px;
  white-space: nowrap;
  color: ${(p) => (p.$dim ? "#333" : "inherit")};
  input {
    appearance: none;
    display: grid;
    place-items: center;
    width: ${(p) => (p.$narrow ? 8 : 13)}px;
    margin-right: ${(p) => (p.$narrow ? 5 : 0)}px;
    height: 13px;
    flex: none;
    overflow: hidden;
    border: 1px solid #333;
    background: #fff;
  }
  input:disabled { border-color: #bbb; background: #dcdcdc; width: 11px; height: 11px; }
  input[type="radio"] { border-radius: 50%; }
  input[type="checkbox"]:checked::after {
    content: "";
    width: 4px;
    height: 8px;
    border: solid #333;
    border-width: 0 1px 1px 0;
    transform: rotate(42deg);
    margin-bottom: 2px;
  }
  input[type="radio"]:checked::after {
    content: "";
    width: 7px;
    height: 7px;
    border-radius: 50%;
    background: #444;
  }
`;

const Combo = styled.label`
  display: flex;
  align-items: center;
  width: 88px;
  height: 21px;
  padding-right: 1px;
  border: 1px solid ${LINE};
  border-top: 0;
  select {
    appearance: none;
    flex: 1;
    min-width: 0;
    padding-left: 1px;
    border: 0;
    background: none;
  }
`;

const EnvButton = styled.button`
  display: flex;
  align-items: center;
  width: 104px;
  height: 38px;
  margin: ${(p) => p.$mt}px 0 0 46px;
  padding: 2px;
  border: 1px solid ${LINE};
  background: #fff;
  opacity: ${(p) => (p.$off ? 0.6 : 1)};
`;

const SideButton = styled.button`
  display: grid;
  place-items: center;
  width: 20px;
  height: 27px;
  border: 1px solid ${LINE};
`;

const GrayChip = styled.button`
  width: 16px;
  height: 24px;
  background: #a0a0a0;
`;

const Spin = styled.span`
  display: flex;
  width: 49px;
  height: 23px;
  border: 1px solid ${LINE};
  background: #fff;
  input { width: 35px; padding-left: 5px; border: 0; background: none; }
  span { display: grid; place-items: center; flex: 1; border-left: 1px solid ${LINE}; }
`;

const LightRow = styled.div`
  display: flex;
  align-items: center;
  height: 26px;
  margin: 8px 0 0 25px;
  white-space: nowrap;
`;

const LightButton = styled.button`
  display: flex;
  align-items: center;
  gap: 4px;
  width: 43px;
  height: 26px;
  flex: none;
  border: 1px solid ${LINE};
  border-right: 0;
`;

const ColorCombo = styled.button`
  display: flex;
  align-items: center;
  justify-content: space-between;
  width: 39px;
  height: 26px;
  margin-left: 3px;
  padding-right: 2px;
  border: 1px solid #9da4b4;
  &::before { content: ""; width: 24px; height: 24px; background: #000; }
`;

const PanelFoot = styled.div`
  display: flex;
  gap: 3px;
  height: 43px;
  padding: 5px 4px 3px 0;
  border: 1px solid ${LINE};
  border-left: 0;
`;

const FootButton = styled.button`
  display: flex;
  align-items: center;
  gap: 18px;
  width: ${(p) => (p.$main ? 103 : 68)}px;
  white-space: nowrap;
  border: 1px solid ${LINE};
  border-left: ${(p) => (p.$main ? `1px solid ${LINE}` : 0)};
`;

/* ---------- palette and viewport ---------- */

const Palette = styled.div`
  display: grid;
  grid-template-columns: 28px 28px;
  grid-template-rows: 4px;
  grid-auto-rows: 28px;
  align-content: start;
  width: 63px;
  margin-left: 5px;
  padding-top: 3px;
  &::before {
    content: "";
    grid-column: 1 / 3;
    height: 4px;
    margin: 0 1px;
    border: 1px solid ${LINE};
    border-width: 1px 0;
  }
`;

const ViewArea = styled.section`
  display: flex;
  flex-direction: column;
  flex: 1;
  min-width: 0;
  padding-right: 1px;
`;

const Canvas = styled.div`
  flex: 1;
  min-height: 0;
  display: grid;
  grid-template: minmax(0, 1fr) / minmax(0, 1fr);
  background: #9ea4aa;
  > * { grid-area: 1 / 1; }
  > svg { width: 100%; height: 100%; }
`;

const ViewLabel = styled.button`
  display: flex;
  align-items: center;
  align-self: start;
  justify-self: start;
  height: 18px;
  margin-top: 1px;
  padding-left: 8px;
  gap: 7px;
  width: 48px;
  background: #859fee;
  font-weight: 600;
`;

const ViewTabs = styled.nav`
  position: relative;
  display: flex;
  align-items: center;
  height: 23px;
  padding-left: 3px;
`;

const ViewTab = styled.button`
  height: 20px;
  width: ${(p) => p.$w}px;
  white-space: nowrap;
  border-bottom: ${(p) => (p.$on ? `1px solid ${LINE}` : 0)};
  border-right: ${(p) => (p.$on ? `1px solid ${LINE}` : 0)};
`;

const Watermark = styled.div`
  position: absolute;
  top: 0;
  right: 0;
  width: 324px;
  height: 40px;
  overflow: hidden;
  color: #b0b3b8;
  pointer-events: none;
  font-size: 14px;
  line-height: 20px;
  white-space: nowrap;
  strong { display: block; height: 17px; line-height: 10px; font-size: 18px; font-weight: 400; }
`;

/* ---------- bottom bars ---------- */

const OsnapBar = styled.div`
  display: flex;
  align-items: center;
  height: 37px;
  padding: 0 0 8px 9px;
  label { gap: 1px; }
`;

const OsnapSlot = styled.div`
  width: ${(p) => p.$w}px;
`;

const StatusBar = styled.footer`
  display: flex;
  height: 20px;
  border-top: 1px solid ${LINE};
`;

const StatusCell = styled.button`
  display: flex;
  align-items: center;
  justify-content: ${(p) => (p.$start ? "flex-start" : "center")};
  width: ${(p) => p.$w}px;
  flex: none;
  gap: 2px;
  padding-left: ${(p) => (p.$start ? 2 : 0)}px;
  white-space: nowrap;
  border-right: 1px solid ${LINE};
  font-weight: ${(p) => (p.$on ? 600 : 400)};
  background: ${(p) => (p.$on ? "#d2d9ee" : "none")};
  span { margin: 0; width: 14px; height: 14px; }
`;

const Taskbar = styled.div`
  display: flex;
  align-items: stretch;
  height: 40px;
  background: #060a11;
  color: #fff;
`;

const TaskButton = styled.button`
  display: grid;
  place-items: center;
  width: ${(p) => p.$w || 49}px;
  background: ${(p) => (p.$on ? "#3b3f45" : "none")};
  border-bottom: 2px solid ${(p) => (p.$open ? "#76b9ed" : "transparent")};
`;

const Search = styled.label`
  display: flex;
  align-items: center;
  width: 344px;
  padding: 0 14px 0 10px;
  gap: 10px;
  background: #f2f2f2;
  color: #222;
  input { flex: 1; border: 0; background: none; font-size: 14px; outline: 0; }
  input::placeholder { color: #333; opacity: 1; }
`;

const Tray = styled.div`
  display: flex;
  align-items: center;
  margin-left: auto;
`;

const Clock = styled.time`
  width: 86px;
  text-align: center;
  line-height: 17px;
`;

const Chevron = ({ d = "M1 2l4 4 4-4", w = 1.2, c = "#333", s = 10 }) => (
  <svg width={s} height={s} viewBox="0 0 10 10" fill="none" stroke={c} strokeWidth={w}><path d={d} /></svg>
);
const UP = "M1 7l4-4 4 4";

const menus = [
  ["File", 32], ["Edit", 34], ["View", 39], ["Curve", 45], ["Surface", 53], ["SubD", 42], ["Solid", 40], ["Mesh", 43],
  ["Dimension", 71], ["Transform", 68], ["Tools", 42], ["Analyze", 55], ["Render", 51], ["Panels", 48], ["Help", 40],
];
const standardTools =
  "page open save* print props cut copy paste undo* hand orbit zoomIn zoomWin zoomExt zoomSel undoView* four* car* cplane* cplaneSet* select* bulb* lock* layers* wheel* ballGray ballDots* ball* spot* gear* dim* grass* help*".split(" ");
const toolTabs = [
  ["SubD Tools", 82], ["CPlanes", 62], ["Set View", 64], ["Display", 59], ["Select", 53], ["Viewport Layout", 106],
  ["Visibility", 66], ["Transform", 74], ["Mesh Tools", 82], ["Solid Tools", 77], ["Render Tools", 90], ["Drafting", 63],
  ["New in V7", 75], ["Curve Tools", 83], ["Surface Tools", 90],
];
const subdTools =
  "hex plane cone truncated cylinder sphere ellipsoid torus box sweep1 sweep2 loft multipipe patch patch2 quad bend cube subdBox link stitch linkBox insert gridBall diamondBox bucket | bridge symmetry | redX pill bend3 extrude pipe | bigGrid list wrench swap | yBox yBend yBall yPatch brush | yCone".split(" ");
const paletteTools =
  "arrow dot* poly* curve* circle* ellipse* arc* rect* polygon* fillet* surface* sweep* cube* balls* project* meshSurf* puzzle explode trim split union* three editCrv editPts* text move* scatter orient boolBox* extrudeUp* array* align* flow* check* solids* pyramid*".split(" ");
const layers = [
  { name: "finished part", color: NAVY, current: true },
  { name: "DIAMONDS 1.4", color: "#7d0808" },
  { name: "diamonds 1", color: "#cc484d" },
];
const osnaps = [
  ["End", 43, 1], ["Near", 48, 1], ["Point", 51, 1], ["Mid", 44, 1], ["Cen", 44, 0], ["Int", 37, 1], ["Perp", 47, 1],
  ["Tan", 43, 0], ["Quad", 52, 1], ["Knot", 48, 0], ["Vertex", 56, 1],
];

function ToolButton({ id }) {
  const name = id.replace("*", "");
  return (
    <Tool type="button" aria-label={name}>
      <Icon name={name} fly={id.endsWith("*")} />
    </Tool>
  );
}

function Environment({ mt, off, label }) {
  return (
    <EnvButton type="button" $mt={mt} $off={off} disabled={off} aria-label={label}>
      <svg width="98" height="33" viewBox="0 0 98 33">
        <path d="M0 0h77v33H0z" fill="url(#env)" />
        <path d="M36 8l7 15c-2 4-13 4-14 0z" fill="#f1f1f1" />
        <circle cx="48" cy="20" r="3" fill="#eee" stroke="#bbb" />
        <path d="M63 24l12-14 2 2-11 13-4 1z" fill={off ? "#777" : "#28a02c"} stroke="#23341f" />
        <path d="M74 10l2-2 2 2-2 3z" fill={off ? "#999" : "#c33"} stroke="#442" strokeWidth=".5" />
        <path d="M84 14l4 4 4-4" fill="none" stroke="#555" strokeWidth="1.2" />
      </svg>
    </EnvButton>
  );
}

function Layers() {
  return (
    <LayersPanel>
      <LayersHead>
        <LayersTab type="button">
          <Icon name="layers" size={18} />
          Layers
        </LayersTab>
        <svg width="20" height="22"><path d="M0 .5L20 21.500" fill="none" stroke={LINE} /></svg>
        <HeadRest><Icon name="cog" size={18} /></HeadRest>
      </LayersHead>
      <LayersBody>
        <SmallTools>
          {["page", "copy", "redCross", "up", "down", "left", "filter", "pageGray"].map((n) => (
            <SmallTool key={n} type="button" aria-label={n}>
              <Icon name={n} size={23} fly={n === "filter" || n === "pageGray"} />
            </SmallTool>
          ))}
        </SmallTools>
        <TableBox>
          <LayerTable>
            <colgroup>
              <col width="97" /><col width="28" /><col width="17" /><col width="17" /><col width="17" /><col width="15" />
            </colgroup>
            <thead>
              <tr><th>Layer</th><th>C...</th><th /><th /><th /><th>M</th></tr>
            </thead>
            <tbody>
              {layers.map((l) => (
                <LayerRow key={l.name} $on={l.current}>
                  <td>{l.name}</td>
                  <td>{l.current && <svg width="14" height="10" viewBox="0 0 14 10"><path d="M1 5l4 4 8-8" fill="none" stroke="#111" strokeWidth="1.6" /></svg>}</td>
                  <td>
                    {!l.current && (
                      <svg width="10" height="14" viewBox="0 0 10 14">
                        <path d="M3 8C-1 4 2 1 5 1s6 3 2 7v2H3z" fill="#ffe46a" stroke="#55430c" />
                        <path d="M3 12h4" stroke="#444" strokeWidth="2" />
                      </svg>
                    )}
                  </td>
                  <td>
                    {!l.current && (
                      <svg width="13" height="14" viewBox="0 0 13 14">
                        <path d="M1 6h8v6H1z" fill="#fbd43f" stroke="#55430c" />
                        <path d="M7 6V3c0-3 5-3 5 0v2" fill="none" stroke="#222" strokeWidth="1.3" />
                      </svg>
                    )}
                  </td>
                  <td><Swatch $c={l.color} $edge={l.current && "#fff"} /></td>
                  <td>{l.current && <Material />}</td>
                </LayerRow>
              ))}
            </tbody>
          </LayerTable>
        </TableBox>
        <HScroll>
          <Chevron d="M7 1L3 5l4 4" w={1.8} />
          <i />
          <Chevron d="M3 1l4 4-4 4" w={1.8} />
        </HScroll>
      </LayersBody>
    </LayersPanel>
  );
}

function Rendering() {
  const [backdrop, setBackdrop] = useState("Solid color");
  const radio = (name) => (
    <Check>
      <input type="radio" name="backdrop" checked={backdrop === name} onChange={() => setBackdrop(name)} />
      {name}
    </Check>
  );
  return (
    <RenderPanel>
      <PanelTitle>Rendering</PanelTitle>
      <IconTabs>
        {["wheel", "ballPot", "tube", "open", "bookHelp", "cog"].map((n) => (
          <IconTab key={n} type="button" $on={n === "ballPot"} aria-label={n}><Icon name={n} size={20} /></IconTab>
        ))}
      </IconTabs>
      <PanelBody>
        <Fields>
          <Row $h={21} $in={19} $end={5}>
            <label htmlFor="quality">Quality:</label>
            <Combo>
              <select id="quality"><option>Draft quality</option></select>
              <Chevron c="#666" s={9} />
            </Combo>
          </Row>
          <Section $mt={14}><Chevron w={1.8} />Backdrop</Section>
          <Row>{radio("Solid color")}<GrayChip type="button" aria-label="Backdrop color" /></Row>
          <Row>{radio("Gradient")}</Row>
          <Row>{radio("360° Environment")}</Row>
          <Environment mt={0} off label="Backdrop environment" />
          <Row>{radio("Wallpaper")}</Row>
          <Row $mt={14}><Check><input type="checkbox" />Transparent backg...</Check></Row>
          <Row $h={42} $end={8}>
            <Check><input type="checkbox" defaultChecked />Ground plane</Check>
            <SideButton type="button" aria-label="Ground plane settings">
              <svg width="16" height="16"><path d="M1 7h15v9H1z" fill="#2f8672" stroke="#222" /><path d="M1 10h15M1 13h15M5 7v9M9 7v9M13 7v9" stroke="#9cc" strokeWidth=".6" /><path d="M5 5c2-4 5-4 7-3h4v3H9z" fill="#999" stroke="#222" /></svg>
            </SideButton>
          </Row>
          <Row $h={24}><Check><input type="checkbox" defaultChecked />Use custom enviro...</Check></Row>
          <Environment mt={4} label="Custom environment" />
          <Section $mt={15}><Chevron w={1.8} />Lighting</Section>
          <Row $end={8}>
            <Check><input type="checkbox" defaultChecked />Sun</Check>
            <SideButton type="button" aria-label="Sun settings">
              <svg width="14" height="14" viewBox="0 0 16 16"><path d="M8 1l2 3 4-2-1 4 3 2-3 2 1 4-4-1-2 3-2-3-4 1 1-4-3-2 3-2-1-4 4 2z" fill="#f0661c" stroke="#7c2408" /><path d="M4 7h8" stroke="#111" strokeWidth="2" /></svg>
            </SideButton>
          </Row>
          <Row $mt={12} $end={16}>
            <Check $narrow><input type="checkbox" defaultChecked aria-label="Skylight" />Intensity:</Check>
            <Spin>
              <input aria-label="Intensity" defaultValue="1.0" />
              <span><Chevron d="M2 7l3-4 3 4z" c="#222" s={8} /><Chevron d="M2 3l3 4 3-4z" c="#222" s={8} /></span>
            </Spin>
          </Row>
          <Row $h={25} $in={43}><Check><input type="checkbox" defaultChecked />Use custom en...</Check></Row>
          <Environment mt={2} label="Skylight environment" />
          <LightRow>
            <LightButton type="button">
              <svg width="19" height="19"><path d="M4 16c0-2 2-3 2-6s3-7 7-6 5 5 2 8-5 2-7 3-3 2-4 1z" fill="#f3dc3c" stroke="#55430c" /></svg>
              Li...
            </LightButton>
            nt light:
            <ColorCombo type="button" aria-label="Ambient light"><Chevron c="#666" /></ColorCombo>
          </LightRow>
        </Fields>
        <VScroll><Chevron d={UP} w={1.8} /><i /><Chevron w={1.8} /></VScroll>
      </PanelBody>
      <PanelFoot>
        <FootButton type="button">o Defaults</FootButton>
        <FootButton type="button" $main><Icon name="ball" />Render</FootButton>
      </PanelFoot>
    </RenderPanel>
  );
}

const Office = ({ c, letter, round }) => (
  <svg width="26" height="24" viewBox="0 0 26 24">
    {round ? <circle cx="14" cy="12" r="11" fill="#e8694a" /> : <rect x="6" y="1" width="19" height="22" rx="1" fill={c[1]} />}
    {!round && <path d="M6 12h19v10H6z" fill={c[0]} opacity=".6" />}
    <rect x="1" y="6" width="12" height="12" rx="1" fill={c[0]} />
    <text x="7" y="16" fontSize="11" fontWeight="700" textAnchor="middle" fill="#fff">{letter}</text>
  </svg>
);

const Adobe = ({ c, children }) => (
  <svg width="24" height="24" viewBox="0 0 24 24">
    <rect x="2" y="1" width="20" height="22" fill="#101a24" stroke={c} strokeWidth="1.5" />
    <text x="12" y="16" fontSize="12" fontWeight="600" textAnchor="middle" fill={c}>{children}</text>
  </svg>
);

const Rhino = ({ size }) => (
  <svg width={size} height={size} viewBox="0 0 22 22">
    <path d="M0 0h22v22H0z" fill="#08090b" />
    <path d="M1 2l4 2 4 8 1-11 4 6 1 6 6 1-3 5-7 3-7-6z" fill="#fff" />
    <path d="M5 13l6 5 6-1M10 12l4 2" stroke="#111" fill="none" />
    <path d="M16 2h4l-2 5" stroke="#ccc" fill="none" />
  </svg>
);

export default function App() {
  return (
    <Window>
      <GlobalStyle />
      <Defs aria-hidden="true">
        <linearGradient id="blue" x1="0" y1="0" x2="1" y2="1"><stop offset="0" stopColor="#a3b7f8" /><stop offset="1" stopColor="#4a6ad6" /></linearGradient>
        <linearGradient id="dark" x1="0" y1="0" x2="1" y2="1"><stop offset="0" stopColor="#7f96e2" /><stop offset="1" stopColor="#2f468f" /></linearGradient>
        <radialGradient id="gray" cx=".35" cy=".3"><stop offset="0" stopColor="#fff" /><stop offset="1" stopColor="#65686c" /></radialGradient>
        <radialGradient id="ballblue" cx=".35" cy=".3" r=".7"><stop offset="0" stopColor="#dfe9ff" /><stop offset=".4" stopColor="#3f63d8" /><stop offset="1" stopColor="#0b1c7c" /></radialGradient>
        <linearGradient id="env" x1="0" y1="0" x2="0" y2="1"><stop offset="0" stopColor="#c9c9c9" /><stop offset="1" stopColor="#dedede" /></linearGradient>
      </Defs>

      <TitleBar>
        <Rhino size={16} />
        <Title>DW 6900 DIAL FULL STONES (14 MB) - Rhinoceros 7 Commercial - [Top]</Title>
        <WinButton type="button" aria-label="Minimize"><svg width="11" height="11"><path d="M0 5.500h11" stroke="#000" /></svg></WinButton>
        <WinButton type="button" aria-label="Restore"><svg width="11" height="11" fill="none" stroke="#000"><path d="M.5 2.500h8v8h-8zM2.500 2.500v-2h8v8h-2" /></svg></WinButton>
        <WinButton type="button" aria-label="Close"><svg width="11" height="11" stroke="#000"><path d="M.5.500l10 10M10.500.500l-10 10" /></svg></WinButton>
      </TitleBar>
      <MenuBar>
        {menus.map(([m, w]) => <MenuItem key={m} type="button" $w={w}>{m}</MenuItem>)}
      </MenuBar>

      <CommandArea>
        <CommandText>
          <History>
            <div>Display mode set to "Rendered".</div>
            <div>Display mode set to "Shaded".</div>
            <div>Display mode set to "Wireframe".</div>
          </History>
          <CommandLine>Command:<input type="text" /></CommandLine>
        </CommandText>
        <CommandScroll>
          <ScrollPair>
            <Chevron d={UP} w={1.8} s={9} />
            <Chevron w={1.8} s={9} />
          </ScrollPair>
          <svg width="13" height="17"><path d="M.5.500h12v16H.5zM.5 8.500h12" fill="#e8e8e8" stroke="#999" /><path d="M4 6l2.500-3L9 6zM4 11l2.500 3L9 11z" fill="#111" /></svg>
        </CommandScroll>
      </CommandArea>

      <ToolRow $h={37} $line>
        {standardTools.map((t) => <ToolButton key={t} id={t} />)}
      </ToolRow>
      <TabStrip>
        {toolTabs.map(([t, w], i) => <ToolTab key={t} type="button" $w={w} $on={i === 0}>{t}</ToolTab>)}
        <StripRest><Icon name="cog" size={20} /></StripRest>
      </TabStrip>
      <ToolRow $h={30}>
        {subdTools.map((t, i) => (t === "|" ? <Split key={i} /> : <ToolButton key={i} id={t} />))}
        <Overflow type="button">»</Overflow>
      </ToolRow>
      <BarGap />

      <Main>
        <Layers />
        <Rendering />
        <Palette>
          {paletteTools.map((t) => <ToolButton key={t} id={t} />)}
        </Palette>
        <ViewArea>
          <Canvas>
            <svg viewBox="449 208 830 632" preserveAspectRatio="xMinYMin slice">
              <path d="M568 208v604" stroke="#3f8f3f" strokeWidth="1.5" />
              <path d="M568 812h1400" stroke="#a2363e" strokeWidth="1.5" />
              <path d="M486.500 774v30h30" fill="none" stroke="#5d6268" />
              <text x="488" y="773" fontSize="13" fill="#565b61">y</text>
              <text x="518" y="805" fontSize="13" fill="#565b61">x</text>
              <Dial />
            </svg>
            <ViewLabel type="button">
              Top
              <svg width="12" height="14"><path d="M1.500 0v14" stroke="#223" /><path d="M4 5h7l-3.500 5z" fill="#223" /></svg>
            </ViewLabel>
          </Canvas>
          <ViewTabs>
            <ViewTab type="button" $w={74}>Perspectiva</ViewTab>
            <ViewTab type="button" $w={34} $on>Top</ViewTab>
            <ViewTab type="button" $w={54}>Frontal</ViewTab>
            <ViewTab type="button" $w={62}>Izquierda</ViewTab>
            <ViewTab type="button" $w={24} aria-label="New viewport">
              <svg width="24" height="10"><path d="M10.500.500h3v3h3v3h-3v3h-3v-3h-3v-3h3z" fill="#fff" stroke="#777" /></svg>
            </ViewTab>
            <Watermark><strong>Activar Windows</strong>Ve a Configuración para activar Windows.</Watermark>
          </ViewTabs>
        </ViewArea>
      </Main>

      <OsnapBar>
        {osnaps.map(([n, w, on]) => (
          <OsnapSlot key={n} $w={w}><Check><input type="checkbox" defaultChecked={!!on} />{n}</Check></OsnapSlot>
        ))}
        <OsnapSlot $w={68}><Check $dim><input type="checkbox" disabled />Project</Check></OsnapSlot>
        <OsnapSlot $w={68}><Check $dim><input type="checkbox" disabled />Disable</Check></OsnapSlot>
      </OsnapBar>

      <StatusBar>
        <StatusCell type="button" $w={50}>CPlane</StatusCell>
        <StatusCell type="button" $w={88}>x 38.47</StatusCell>
        <StatusCell type="button" $w={88}>y 31.45</StatusCell>
        <StatusCell type="button" $w={88}>z</StatusCell>
        <StatusCell type="button" $w={88}>Millimeters</StatusCell>
        <StatusCell type="button" $w={168} $start><Swatch $c={NAVY} />finished part</StatusCell>
        <StatusCell type="button" $w={65}>Grid Snap</StatusCell>
        <StatusCell type="button" $w={45}>Ortho</StatusCell>
        <StatusCell type="button" $w={47} $on>Planar</StatusCell>
        <StatusCell type="button" $w={48} $on>Osnap</StatusCell>
        <StatusCell type="button" $w={75} $on>SmartTrack</StatusCell>
        <StatusCell type="button" $w={58} $on>Gumball</StatusCell>
        <StatusCell type="button" $w={92}>Record History</StatusCell>
        <StatusCell type="button" $w={40}>Filter</StatusCell>
        <StatusCell type="button" $w={234} $start>Minutes from last save: 12</StatusCell>
      </StatusBar>

      <Taskbar>
        <TaskButton type="button" $w={48} aria-label="Start">
          <svg width="17" height="17"><path d="M0 2.500L7 1.500V8H0zM8 1.300L17 0v8H8zM0 9h7v6.500L0 14.500zM8 9h9v8l-9-1.300z" fill="#fff" /></svg>
        </TaskButton>
        <Search>
          <svg width="20" height="24"><circle cx="10" cy="12" r="8.500" fill="none" stroke="#111" strokeWidth="2.500" /></svg>
          <input type="text" aria-label="Buscar" placeholder="Escribe aquí para buscar" />
          <svg width="13" height="18" fill="none" stroke="#333"><rect x="4" y="1" width="5" height="10" rx="2" /><path d="M1 7v4c0 3 2 4 5 4s6-1 6-4V7M6.500 15v3M4 17.500h5" /></svg>
        </Search>
        <TaskButton type="button" aria-label="Task view">
          <svg width="18" height="18" fill="none" stroke="#fff"><path d="M1.500 5.500h10v7h-10zM1 1.500h11M1 16.500h11M1.500 1v2M11.500 1v2M1.500 15v2M11.500 15v2M15.500 1v16" /><path d="M14 8h3v3h-3z" fill="#fff" /></svg>
        </TaskButton>
        <TaskButton type="button" aria-label="Illustrator"><Adobe c="#ff8a1e">Ai</Adobe></TaskButton>
        <TaskButton type="button" aria-label="Excel"><Office c={["#107c41", "#2bb673"]} letter="X" /></TaskButton>
        <TaskButton type="button" aria-label="PowerPoint"><Office c={["#c43e1c", "#e8694a"]} letter="P" round /></TaskButton>
        <TaskButton type="button" aria-label="Word"><Office c={["#185abd", "#41a5ee"]} letter="W" /></TaskButton>
        <TaskButton type="button" aria-label="Files">
          <svg width="22" height="20"><path d="M0 2h8l2 2h12v15H0z" fill="#f8d775" /><path d="M3 10h16v9h-4v-4H7v4H3z" fill="#3fa9e8" /></svg>
        </TaskButton>
        <TaskButton type="button" $open aria-label="Photoshop"><Adobe c="#31c5f0">Ps</Adobe></TaskButton>
        <TaskButton type="button" aria-label="Calculator">
          <svg width="18" height="24"><path d="M0 0h18v24H0z" fill="#fff" /><path d="M3 3h12v4H3z" fill="#060a11" /><path d="M3 11.500h12M3 15.500h12M3 19.500h12" stroke="#060a11" strokeWidth="2" strokeDasharray="2 3" /></svg>
        </TaskButton>
        <TaskButton type="button" $on $open aria-label="Rhinoceros"><Rhino size={26} /></TaskButton>
        <Tray>
          <svg width="16" height="16" fill="none" stroke="#fff" strokeWidth="1.2"><circle cx="6" cy="7" r="3" /><path d="M1 15c0-6 10-6 10 0" /><circle cx="11" cy="3.500" r="2.500" /><path d="M11 7c3 0 4 2 4 4" /></svg>
          <TaskButton type="button" $w={44} aria-label="Show hidden icons"><svg width="13" height="8"><path d="M1 7l5.500-5.500L12 7" fill="none" stroke="#fff" strokeWidth="1.300" /></svg></TaskButton>
          <svg width="96" height="18">
            <path d="M0 14l5-12 3 5-3 8z" fill="#37a64a" /><path d="M5 15l5-9 5 8z" fill="#2a7fd4" /><circle cx="10" cy="5" r="4.500" fill="#f07a24" /><path d="M8 5c1-2 4-1 4 0" stroke="#fff" fill="none" />
            <rect x="23" y="2" width="13" height="13" rx="4" fill="#13a7a0" /><circle cx="29" cy="8" r="4.500" fill="#fff" /><path d="M27 8h4c0-3-4-3-4 0s3 3 4 2" stroke="#13a7a0" fill="none" /><path d="M33 10l4 7h-8z" fill="#d8232a" />
            <path d="M49 4h12v8H49zM47 3v12M52 15h7" fill="none" stroke="#fff" /><circle cx="58" cy="12" r="5" fill="#d8232a" /><path d="M56 10l4 4M60 10l-4 4" stroke="#fff" />
            <path d="M71 7h2l4-4v12l-4-4h-2zM80 6c2 2 2 4 0 6M83 4c3 3 3 7 0 10" fill="none" stroke="#fff" /><path d="M86 3c3 3 3 9 0 12" fill="none" stroke="#777" />
          </svg>
          <span>ESP</span>
          <Clock>12:18 a. m.<br />10/07/2024</Clock>
          <TaskButton type="button" $w={44} aria-label="Notifications">
            <svg width="26" height="28"><path d="M2 3h16v13h-8l-4 4v-4H2z" fill="#fff" /><path d="M4 7h12M4 10h12M4 13h8" stroke="#111" /><circle cx="17" cy="18" r="8" fill="#333" stroke="#888" /><text x="17" y="22" fontSize="12" textAnchor="middle" fill="#fff">5</text></svg>
          </TaskButton>
        </Tray>
      </Taskbar>
    </Window>
  );
}
